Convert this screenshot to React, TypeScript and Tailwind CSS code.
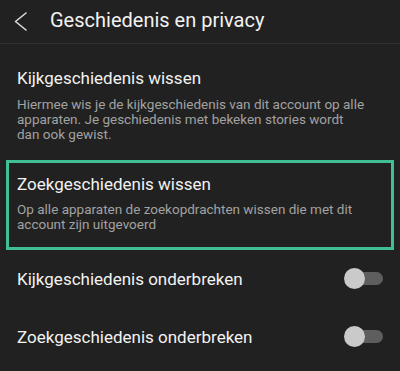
import React from "react";

function Toggle() {
  return (
    <div className="relative w-[39px] h-[21px] shrink-0">
      <div className="absolute right-0 top-[4px] h-[13px] w-[28px] rounded-full bg-[#5e5e5e]" />
      <div className="absolute left-0 top-0 h-[21px] w-[21px] rounded-full bg-[#cacaca]" />
    </div>
  );
}

export default function App() {
  return (
    <div className="w-[400px] h-[371px] overflow-hidden bg-[#212121] font-['Roboto',sans-serif]">
      {/* Header */}
      <div className="h-[44px] flex items-start border-b border-[#303030]">
        <svg width="40" height="43" viewBox="0 0 40 43" className="shrink-0">
          <polyline
            points="26,13 15.5,21.5 26,30"
            fill="none"
            stroke="#dcdcdc"
            strokeWidth="1.6"
            strokeLinecap="round"
            strokeLinejoin="round"
          />
        </svg>
        <h1 className="ml-[10px] pt-[8px] text-[20px] leading-[24px] text-[#f2f2f2]">
          Geschiedenis en privacy
        </h1>
      </div>

      {/* Watch history */}
      <div className="pl-[17px] pt-[24px] pr-[22px]">
        <div className="text-[17px] leading-[20px] text-[#f2f2f2]">
          Kijkgeschiedenis wissen
        </div>
        <p className="mt-[9px] text-[13.5px] leading-[15px] text-[#a2a2a2]">
          Hiermee wis je de kijkgeschiedenis van dit account op alle apparaten.
          Je geschiedenis met bekeken stories wordt
          <br />
          dan ook gewist.
        </p>
      </div>

      {/* Search history (highlighted) */}
      <div className="px-[6px] mt-[18px]">
        <div className="border-[3px] border-[#40bf94] pl-[8px] pr-[10px] pt-[11px] pb-[15px]">
          <div className="text-[17px] leading-[20px] text-[#f2f2f2]">
            Zoekgeschiedenis wissen
          </div>
          <p className="mt-[8px] text-[13.5px] leading-[15px] text-[#a2a2a2]">
            Op alle apparaten de zoekopdrachten wissen die met dit account zijn
            uitgevoerd
          </p>
        </div>
      </div>

      {/* Toggles */}
      <div className="px-[17px] mt-[18px] flex items-center justify-between">
        <span className="text-[17px] leading-[20px] text-[#f2f2f2]">
          Kijkgeschiedenis onderbreken
        </span>
        <Toggle />
      </div>
      <div className="px-[17px] mt-[37px] flex items-center justify-between">
        <span className="text-[17px] leading-[20px] text-[#f2f2f2]">
          Zoekgeschiedenis onderbreken
        </span>
        <Toggle />
      </div>
    </div>
  );
}
